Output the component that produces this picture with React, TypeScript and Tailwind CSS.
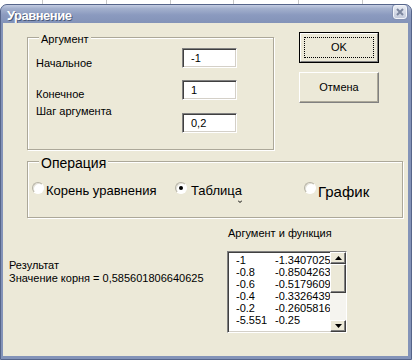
import type { ReactNode } from "react";

const sunken =
  "border border-t-[#808080] border-l-[#808080] border-r-white border-b-white shadow-[inset_1px_1px_0_#404040,inset_-1px_-1px_0_#d4d0c8]";
const raised =
  "border border-t-white border-l-white border-r-[#404040] border-b-[#404040] shadow-[inset_-1px_-1px_0_#808080] bg-[#ece9d8]";

const rows: [string, string][] = [
  ["-1", "-1.34070253372192"],
  ["-0.8", "-0.850426375865936"],
  ["-0.6", "-0.517960906028748"],
  ["-0.4", "-0.332643926143646"],
  ["-0.2", "-0.260581612586975"],
  ["-5.55111512312578E-17", "-0.25"],
];

function Field({ value }: { value: string }) {
  return (
    <div className={`w-[55px] h-[20px] shrink-0 bg-white pl-[8px] pt-[3px] leading-[13px] ${sunken}`}>
      {value}
    </div>
  );
}

function Radio({ checked }: { checked?: boolean }) {
  return (
    <div className="-mt-px flex h-[12px] w-[12px] shrink-0 items-center justify-center rounded-full border border-[#b5b2a4] border-r-white border-b-white bg-white shadow-[inset_1px_1px_0_#e4e2d8]">
      {checked && <div className="h-[4px] w-[4px] rounded-full bg-black" />}
    </div>
  );
}

function Arrow({ up }: { up?: boolean }) {
  return (
    <svg width="7" height="4" viewBox="0 0 7 4">
      <polygon points={up ? "3.5,0 7,4 0,4" : "0,0 7,0 3.5,4"} fill="#000" />
    </svg>
  );
}

function Group({ title, className, legendClass, children }: { title: string; className: string; legendClass: string; children: ReactNode }) {
  return (
    <fieldset className={`border border-[#aca899] shadow-[inset_1px_1px_0_#fff,1px_1px_0_#fff] ${className}`}>
      <legend className={`ml-[11px] bg-[#ece9d8] px-[2px] ${legendClass}`}>{title}</legend>
      {children}
    </fieldset>
  );
}

export default function App() {
  return (
    <div className="h-[360px] w-[412px] overflow-hidden bg-white font-['Liberation_Sans',Arial,sans-serif] text-[11px] leading-[13px] text-black">
      {/* sheet grid behind the dialog */}
      <div className="flex h-[4px]">
        <div className="w-[43px] border-r border-[#c6c6c6]" />
        <div className="w-[64px] border-r border-[#c6c6c6]" />
        <div className="w-[64px] border-r border-[#c6c6c6]" />
        <div className="w-[63px] border-r border-[#c6c6c6]" />
        <div className="w-[65px] border-r border-[#c6c6c6]" />
        <div className="w-[64px] border-r border-[#c6c6c6]" />
      </div>

      <div className="flex h-[356px] flex-col overflow-hidden rounded-t-[7px] border border-[#56658a] bg-[#8393b8]">
        {/* title bar */}
        <div className="flex h-[18px] shrink-0 items-start justify-between bg-[linear-gradient(to_bottom,#c3cce2_0%,#a3b0cd_20%,#8b9abf_55%,#8393b8_100%)] pl-[6px] pr-[4px]">
          <span className="mt-[3px] text-[13px] font-bold leading-[15px] tracking-[-0.5px] text-white [text-shadow:1px_1px_0_#4a5878]">
            Уравнение
          </span>
          <div className="flex h-[14px] w-[14px] items-center justify-center rounded-[3px] border border-[#f4f6fa] bg-[linear-gradient(to_bottom,#e8ebf2,#c4cbdc)] shadow-[0_0_0_1px_#8592b2]">
            <svg width="8" height="8" viewBox="0 0 8 8">
              <path d="M1 1 L7 7 M7 1 L1 7" stroke="#7d879f" strokeWidth="2" />
            </svg>
          </div>
        </div>

        {/* dialog body */}
        <div className="mb-[3px] ml-[2px] mr-[3px] flex-1 bg-[#ece9d8]">
          <div className="flex items-start">
            <Group title="Аргумент" className="ml-[24px] mt-[6px] w-[247px] pb-[17px]" legendClass="pt-[4px] leading-[13px]">
              <div className="pl-[8px]">
                <div className="mt-[2px] flex h-[20px] items-start">
                  <div className="mt-[9px] w-[146px] shrink-0">Начальное</div>
                  <Field value="-1" />
                </div>
                <div className="mt-[12px] flex h-[20px] items-start">
                  <div className="mt-[8px] w-[146px] shrink-0">Конечное</div>
                  <Field value="1" />
                </div>
                <div className="mt-[5px] flex h-[27px] items-start">
                  <div className="w-[146px] shrink-0">Шаг аргумента</div>
                  <div className="mt-[8px]">
                    <Field value="0,2" />
                  </div>
                </div>
              </div>
            </Group>

            <div className="ml-[25px] mt-[9px] flex flex-col gap-[9px]">
              <div className="h-[31px] w-[80px] border border-black bg-[#ece9d8]">
                <div className="h-full border border-t-white border-l-white border-r-[#808080] border-b-[#808080] px-[3px] py-[3px]">
                  <div className="flex h-full items-center justify-center border border-dotted border-black">OK</div>
                </div>
              </div>
              <div className="flex h-[31px] w-[80px] items-center justify-center border border-t-white border-l-white border-r-[#808080] border-b-[#808080] bg-[#ece9d8] shadow-[inset_-1px_-1px_0_#aca899]">
                Отмена
              </div>
            </div>
          </div>

          <Group title="Операция" className="ml-[24px] mt-[2px] w-[376px] pb-[14px]" legendClass="pt-[3px] text-[14px] leading-[16px]">
            <div className="ml-[4px] mt-[12px] flex items-start">
              <div className="flex w-[143px] items-start">
                <Radio />
                <span className="ml-[2px] text-[13px] leading-[15px]">Корень уравнения</span>
              </div>
              <div className="flex w-[129px] items-start">
                <Radio checked />
                <span className="ml-[4px] text-[13px] leading-[15px]">Таблица</span>
                <svg className="-ml-[4px] mt-[17px]" width="4" height="3" viewBox="0 0 4 3">
                  <path d="M0 0.5 L2 2.5 L4 0.5" stroke="#000" strokeWidth="1" fill="none" />
                </svg>
              </div>
              <div className="flex items-start">
                <Radio />
                <span className="ml-[2px] text-[15px] leading-[17px]">График</span>
              </div>
            </div>
          </Group>

          <div className="flex items-start">
            <div className="ml-[6px] mt-[41px] w-[218px] shrink-0">
              <div>Результат</div>
              <div>Значение корня = 0,585601806640625</div>
            </div>
            <div className="mt-[9px]">
              <div className="ml-[1px]">Аргумент и функция</div>
              <div className={`mt-[11px] flex h-[82px] w-[120px] bg-white ${sunken}`}>
                <div className="flex-1 overflow-hidden pl-[8px] pt-[2px]">
                  {rows.map(([a, b]) => (
                    <div key={a} className="flex h-[12px] whitespace-nowrap leading-[12px]">
                      <div className="w-[31px] shrink-0 overflow-hidden">{a}</div>
                      <div className="ml-[8px]">{b}</div>
                    </div>
                  ))}
                </div>
                <div className="flex w-[16px] flex-col bg-[#f5f4ef]">
                  <div className={`flex h-[12px] items-center justify-center ${raised}`}>
                    <Arrow up />
                  </div>
                  <div className={`h-[29px] ${raised}`} />
                  <div className="flex-1" />
                  <div className={`flex h-[12px] items-center justify-center ${raised}`}>
                    <Arrow />
                  </div>
                </div>
              </div>
            </div>
          </div>
        </div>
      </div>
    </div>
  );
}
